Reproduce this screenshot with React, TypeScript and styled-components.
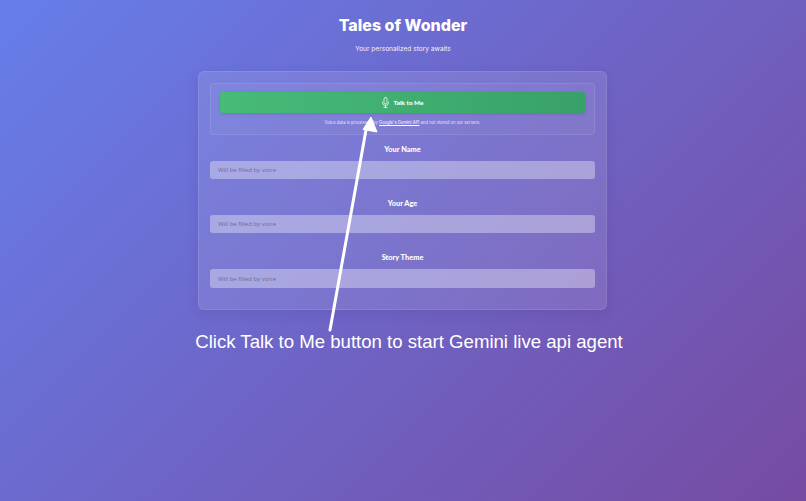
import { createGlobalStyle, styled } from 'styled-components';

const GlobalStyle = createGlobalStyle`
	html,
	body {
		margin: 0;
		height: 100%;
	}

	body {
		background: #667eea;
	}
`;

const Page = styled.div`
	position: relative;
	width: 806px;
	height: 501px;
	overflow: hidden;
	box-sizing: border-box;
	padding-top: 15px;
	display: flex;
	flex-flow: column nowrap;
	align-items: center;
	background: linear-gradient(135deg, #667eea 0%, #764ba2 100%);
	color: #fff;
	font-family: Inter, 'Liberation Sans', sans-serif;
`;

const Title = styled.h1`
	margin: 0;
	font-size: 16px;
	line-height: 20px;
	font-weight: 800;
`;

const Subtitle = styled.p`
	margin: 9px 0 0;
	font-size: 6.6px;
	line-height: 10px;
	color: rgba(255, 255, 255, 0.95);
`;

const Card = styled.div`
	box-sizing: border-box;
	width: 409px;
	height: 239px;
	margin: 17px 1px 0 0;
	padding: 11px 11px 0;
	border: 1px solid rgba(255, 255, 255, 0.1);
	border-radius: 6px;
	background: rgba(255, 255, 255, 0.1);
	box-shadow: 0 3px 12px rgba(60, 40, 130, 0.14);
`;

const VoicePanel = styled.div`
	box-sizing: border-box;
	height: 52px;
	padding: 8px 9px 0;
	border: 1px solid rgba(255, 255, 255, 0.1);
	border-radius: 4px;
	background: rgba(255, 255, 255, 0.04);
	text-align: center;
`;

const TalkButton = styled.button`
	width: 100%;
	height: 21px;
	padding: 0;
	border: none;
	border-radius: 3px;
	display: flex;
	align-items: center;
	justify-content: center;
	gap: 3px;
	background: linear-gradient(90deg, #48bb78, #38a169);
	color: #fff;
	font-family: Lato, sans-serif;
	font-size: 6.4px;
	font-weight: 900;
	box-shadow: 0 1px 3px rgba(40, 60, 110, 0.2);
`;

const Notice = styled.p`
	margin: 7px 0 0;
	font-size: 4.2px;
	line-height: 6px;
	color: rgba(255, 255, 255, 0.85);
`;

const NoticeLink = styled.span`
	color: #fff;
	text-decoration: underline;
`;

const Field = styled.div<{ $top: number }>`
	margin-top: ${({ $top }) => $top}px;
	display: flex;
	flex-flow: column nowrap;
	gap: 6px;
`;

const Label = styled.label`
	font-family: Lato, sans-serif;
	font-size: 7.4px;
	line-height: 10px;
	font-weight: 900;
	text-align: center;
`;

const Input = styled.div<{ $height: number }>`
	box-sizing: border-box;
	height: ${({ $height }) => $height}px;
	padding-left: 8px;
	border-radius: 3px;
	display: flex;
	align-items: center;
	background: rgba(255, 255, 255, 0.35);
	color: #6f6a96;
	font-family: 'Open Sans', sans-serif;
	font-size: 6px;
`;

const Arrow = styled.svg`
	position: absolute;
	left: 0;
	top: 0;
	pointer-events: none;
`;

const Caption = styled.div`
	position: absolute;
	left: 0;
	top: 330px;
	width: 818px;
	text-align: center;
	font-family: 'Liberation Sans', Arial, sans-serif;
	font-size: 18.6px;
	line-height: 24px;
	white-space: nowrap;
`;

function MicIcon() {
	return (
		<svg width="9" height="11" viewBox="0 0 18 22" fill="none" stroke="#fff" strokeWidth="1.5" strokeLinecap="round">
			<rect x="6" y="1" width="6" height="13" rx="3" />
			<path d="M3 10v1a6 6 0 0 0 12 0v-1M9 17v4M6 21h6" />
		</svg>
	);
}

const fields = [
	{ label: 'Your Name', top: 10, height: 18 },
	{ label: 'Your Age', top: 20, height: 18 },
	{ label: 'Story Theme', top: 20, height: 19 }
];

export default function App() {
	return (
		<Page>
			<GlobalStyle />
			<Title>Tales of Wonder</Title>
			<Subtitle>Your personalized story awaits</Subtitle>
			<Card>
				<VoicePanel>
					<TalkButton>
						<MicIcon />
						Talk to Me
					</TalkButton>
					<Notice>
						Voice data is processed by <NoticeLink>Google&apos;s Gemini API</NoticeLink> and not stored on our servers.
					</Notice>
				</VoicePanel>
				{fields.map((field) => (
					<Field key={field.label} $top={field.top}>
						<Label>{field.label}</Label>
						<Input $height={field.height}>Will be filled by voice</Input>
					</Field>
				))}
			</Card>
			<Arrow width="806" height="501" viewBox="0 0 806 501">
				<path d="M330 330L366 130" stroke="#fff" strokeWidth="3" strokeLinecap="round" />
				<path d="M371 117L377 132L363 129.5Z" fill="#fff" stroke="#fff" strokeWidth="1" strokeLinejoin="round" />
			</Arrow>
			<Caption>Click Talk to Me button to start Gemini live api agent</Caption>
		</Page>
	);
}
